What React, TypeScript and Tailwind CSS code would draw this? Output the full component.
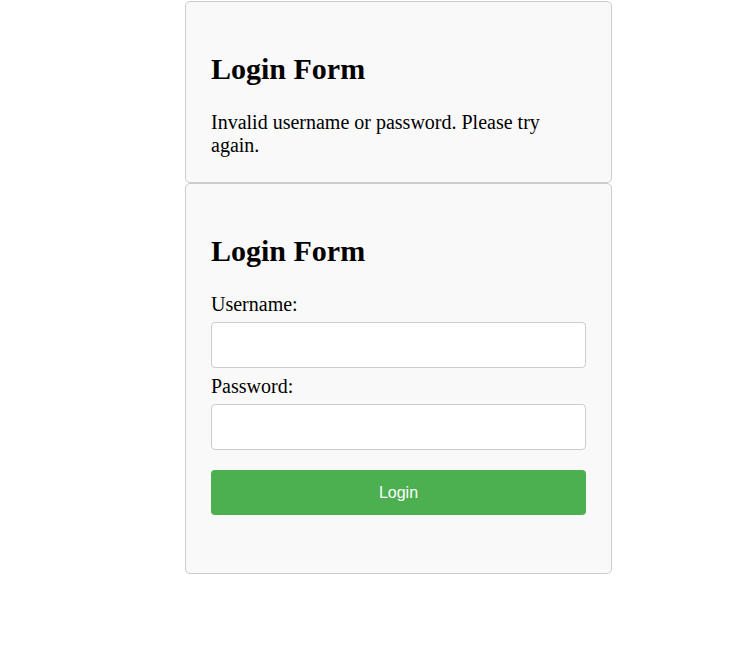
import { useState } from "react";

export default function App() {
	const [username, setUsername] = useState("");
	const [password, setPassword] = useState("");

	return (
		<div className="min-h-screen bg-white font-['Liberation_Serif',serif] text-black pt-[1px]">
			<div className="ml-[185px] w-[427px]">
				{/* error card */}
				<div className="border border-[#cccccc] rounded-[5px] bg-[#f9f9f9] px-[25px] py-[25px]">
					<h2 className="mt-[25px] mb-[25px] text-[30px] leading-[34px] font-bold">Login Form</h2>
					<p className="m-0 text-[20px] leading-[23px]">Invalid username or password. Please try again.</p>
				</div>
				{/* form card */}
				<div className="border border-[#cccccc] rounded-[5px] bg-[#f9f9f9] px-[25px] pt-[25px] pb-[58px]">
					<h2 className="mt-[25px] mb-[25px] text-[30px] leading-[34px] font-bold">Login Form</h2>
					<form onSubmit={(e) => e.preventDefault()}>
						<label className="block text-[20px] leading-[23px] mb-[6px]">Username:</label>
						<input
							type="text"
							value={username}
							onChange={(e) => setUsername(e.target.value)}
							className="block w-full h-[46px] bg-white border border-[#cccccc] rounded-[4px] px-[10px] mb-[7px] outline-none"
						/>
						<label className="block text-[20px] leading-[23px] mb-[6px]">Password:</label>
						<input
							type="password"
							value={password}
							onChange={(e) => setPassword(e.target.value)}
							className="block w-full h-[46px] bg-white border border-[#cccccc] rounded-[4px] px-[10px] mb-[20px] outline-none"
						/>
						<button
							type="submit"
							className="block w-full h-[45px] bg-[#4caf50] text-white rounded-[4px] font-['Liberation_Sans',Arial,sans-serif] text-[16px]"
						>
							Login
						</button>
					</form>
				</div>
			</div>
		</div>
	);
}
